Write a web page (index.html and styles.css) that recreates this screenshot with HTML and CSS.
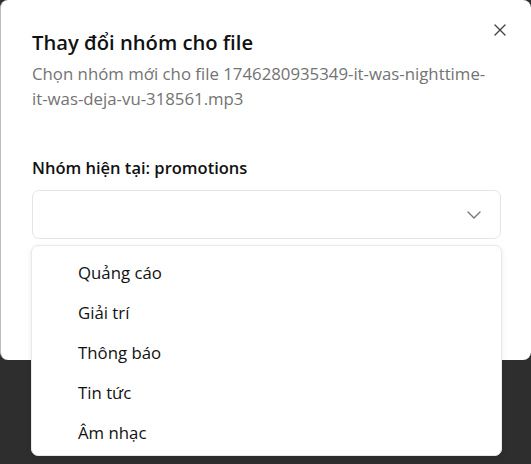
FILE: index.html
```html
<!DOCTYPE html>
<html lang="vi">
<head>
<meta charset="utf-8">
<title>Thay đổi nhóm cho file</title>
<link rel="stylesheet" href="styles.css">
</head>
<body>
<div class="dialog">
  <button class="close" aria-label="Đóng">
    <svg width="12" height="12" viewBox="0 0 12 12"><path d="M1 1L11 11M11 1L1 11" stroke="#444" stroke-width="1.4" stroke-linecap="round"/></svg>
  </button>
  <h2 class="title">Thay đổi nhóm cho file</h2>
  <p class="desc">Chọn nhóm mới cho file 1746280935349-it-was-nighttime-it-was-deja-vu-318561.mp3</p>
  <div class="field">
    <div class="label">Nhóm hiện tại: promotions</div>
    <div class="select">
      <svg width="14" height="8" viewBox="0 0 14 8"><path d="M1 1L7 7L13 1" fill="none" stroke="#777" stroke-width="1.4" stroke-linecap="round" stroke-linejoin="round"/></svg>
    </div>
  </div>
  <ul class="menu">
    <li>Quảng cáo</li>
    <li>Giải trí</li>
    <li>Thông báo</li>
    <li>Tin tức</li>
    <li>Âm nhạc</li>
  </ul>
</div>
</body>
</html>
```
FILE: styles.css
```css
* { box-sizing: border-box; }
html, body { margin: 0; padding: 0; }
body {
  background: #2e2e2e;
  width: 531px;
  height: 464px;
  overflow: hidden;
  font-family: "Open Sans", "Noto Sans", sans-serif;
  color: #111;
}
.dialog {
  position: relative;
  width: 531px;
  height: 360px;
  background: #fff;
  border-radius: 8px;
  border-left: 1px solid #bdbdbd;
  padding: 28px 30px 0 31px;
}
.close {
  position: absolute;
  top: 24px;
  right: 25px;
  width: 12px;
  height: 12px;
  padding: 0;
  border: 0;
  background: none;
  display: flex;
}
.title {
  margin: 0;
  font-size: 20.2px;
  line-height: 28px;
  font-weight: 600;
  color: #111;
}
.desc {
  margin: 5px 0 0;
  padding-right: 14px;
  font-size: 16.8px;
  line-height: 25px;
  color: #737373;
}
.field {
  margin-top: 45px;
  display: flex;
  flex-direction: column;
  gap: 10px;
}
.label {
  font-size: 16.5px;
  line-height: 24px;
  font-weight: 600;
}
.select {
  height: 49px;
  border: 1px solid #e5e5e5;
  border-radius: 7px;
  display: flex;
  align-items: center;
  justify-content: flex-end;
  padding-right: 19px;
}
.menu {
  position: absolute;
  left: 30px;
  top: 245px;
  width: 471px;
  height: 211px;
  margin: 0;
  padding: 6px 0 4px;
  list-style: none;
  background: #fff;
  border: 1px solid #e8e8e8;
  border-radius: 7px;
  box-shadow: 0 2px 6px rgba(0,0,0,0.08);
}
.menu li {
  height: 40px;
  display: flex;
  align-items: center;
  padding-left: 46px;
  font-size: 16.8px;
  color: #111;
}
```
